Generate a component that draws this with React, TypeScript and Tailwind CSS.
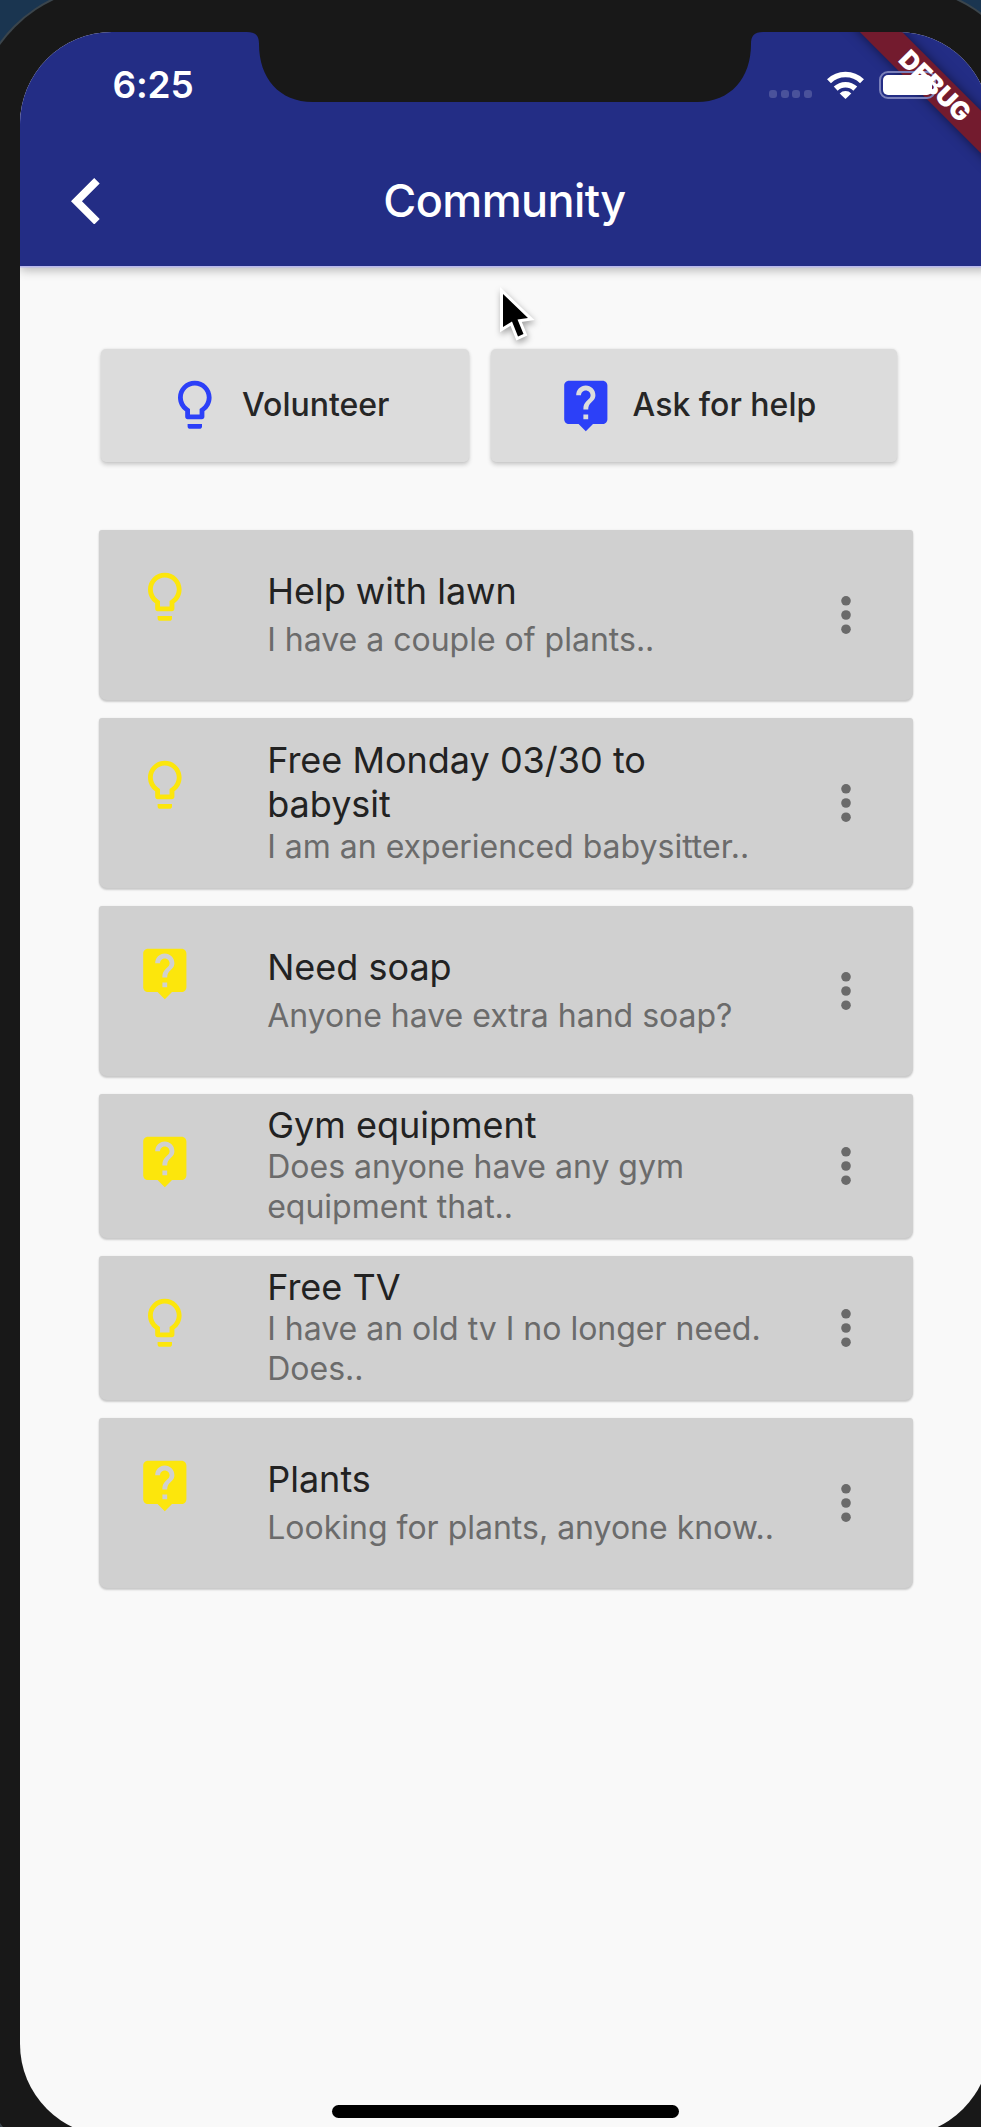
type Kind = "offer" | "request";

type Post = {
  kind: Kind;
  title: string;
  body: string;
  card: string;
  text: string;
  gap: string;
};

const posts: Post[] = [
  { kind: "offer", title: "Help with lawn", body: "I have a couple of plants..", card: "h-[170px]", text: "pt-[39px]", gap: "mt-[7px]" },
  { kind: "offer", title: "Free Monday 03/30 to babysit", body: "I am an experienced babysitter..", card: "h-[170px]", text: "pt-[20.5px]", gap: "mt-[0.5px]" },
  { kind: "request", title: "Need soap", body: "Anyone have extra hand soap?", card: "h-[170px]", text: "pt-[39px]", gap: "mt-[7px]" },
  { kind: "request", title: "Gym equipment", body: "Does anyone have any gym equipment that..", card: "h-[144px]", text: "pt-[9px]", gap: "mt-0" },
  { kind: "offer", title: "Free TV", body: "I have an old tv I no longer need. Does..", card: "h-[144px]", text: "pt-[9px]", gap: "mt-0" },
  { kind: "request", title: "Plants", body: "Looking for plants, anyone know..", card: "h-[170px]", text: "pt-[39px]", gap: "mt-[7px]" },
];

function Bulb({ className }: { className: string }) {
  return (
    <svg viewBox="0 0 24 24" fill="currentColor" className={className}>
      <path d="M9 21c0 .55.45 1 1 1h4c.55 0 1-.45 1-1v-1H9v1zm3-19C8.14 2 5 5.14 5 9c0 2.38 1.19 4.47 3 5.74V17c0 .55.45 1 1 1h6c.55 0 1-.45 1-1v-2.26c1.81-1.27 3-3.36 3-5.74 0-3.86-3.14-7-7-7zm2.85 11.1l-.85.6V16h-4v-2.3l-.85-.6C7.8 12.16 7 10.63 7 9c0-2.76 2.24-5 5-5s5 2.24 5 5c0 1.63-.8 3.16-2.15 4.1z" />
    </svg>
  );
}

function LiveHelp({ className }: { className: string }) {
  return (
    <svg viewBox="0 0 24 24" fill="currentColor" className={className}>
      <path d="M19 2H5c-1.11 0-2 .9-2 2v14c0 1.1.89 2 2 2h4l3 3 3-3h4c1.1 0 2-.9 2-2V4c0-1.1-.9-2-2-2zm-6 16h-2v-2h2v2zm2.07-7.75l-.9.92C13.45 11.9 13 12.5 13 14h-2v-.5c0-1.1.45-2.1 1.17-2.83l1.24-1.26c.37-.36.59-.86.59-1.41 0-1.1-.9-2-2-2s-2 .9-2 2H8c0-2.21 1.79-4 4-4s4 1.79 4 4c0 .88-.36 1.68-.93 2.25z" />
    </svg>
  );
}

function KindIcon({ kind, className }: { kind: Kind; className: string }) {
  return kind === "offer" ? <Bulb className={className} /> : <LiveHelp className={className} />;
}

function MoreDots() {
  return (
    <svg viewBox="0 0 12 40" fill="currentColor" className="h-[40px] w-[12px] text-[#6a6a6a]">
      <circle cx="6" cy="5.8" r="4.8" />
      <circle cx="6" cy="20" r="4.8" />
      <circle cx="6" cy="34.2" r="4.8" />
    </svg>
  );
}

function StatusIcons() {
  return (
    <div className="flex items-center">
      <div className="mt-[18px] flex gap-[3.7px]">
        <span className="size-2 rounded-[3px] bg-[#4a529b]" />
        <span className="size-2 rounded-[3px] bg-[#4a529b]" />
        <span className="size-2 rounded-[3px] bg-[#4a529b]" />
        <span className="size-2 rounded-[3px] bg-[#4a529b]" />
      </div>
      <svg viewBox="0 0 37 28" className="ml-[14.5px] h-[28px] w-[37px]" fill="none" stroke="white" strokeWidth="5.6">
        <path d="M2 10.2a23.6 23.6 0 0 1 33 0" />
        <path d="M8.7 17.6a14.2 14.2 0 0 1 19.6 0" />
        <path d="M18.5 28l-5.8-5.6a8.4 8.4 0 0 1 11.6 0z" fill="white" stroke="none" />
      </svg>
      <div className="ml-[15.5px] h-[28px] w-[57px] rounded-[9px] border-2 border-[#7a80ba] p-[2px]">
        <div className="h-full w-full rounded-[5px] bg-white" />
      </div>
    </div>
  );
}

function ActionButton({ kind, label, className }: { kind: Kind; label: string; className: string }) {
  return (
    <button
      className={`flex h-[113px] items-center gap-[18.5px] rounded-[5px] bg-[#dcdcdc] text-[32px] font-medium text-[#262626] shadow-[0_3px_4px_rgba(0,0,0,0.17),0_0_3px_rgba(0,0,0,0.1)] ${className}`}
    >
      <KindIcon kind={kind} className="size-[57.6px] shrink-0 text-[#2c40f8]" />
      {label}
    </button>
  );
}

function PostCard({ post }: { post: Post }) {
  return (
    <li
      className={`flex w-[813.5px] rounded-t-[3px] rounded-b-[8px] bg-[#d0d0d0] pl-[37px] shadow-[0_2px_2px_rgba(0,0,0,0.18),0_0_2px_rgba(0,0,0,0.08)] ${post.card}`}
    >
      <KindIcon kind={post.kind} className="mt-[38px] size-[57.6px] shrink-0 text-[#fce60c]" />
      <div className={`ml-[73.6px] w-[520.8px] shrink-0 ${post.text}`}>
        <h2 className="w-[440px] text-[36px] leading-[44px] text-[#222222]">{post.title}</h2>
        <p className={`text-[32px] leading-[40.3px] text-[#6b6b6b] ${post.gap}`}>{post.body}</p>
      </div>
      <button className="ml-[52px] flex items-center">
        <MoreDots />
      </button>
    </li>
  );
}

export default function App() {
  return (
    <div className="relative h-[2127px] w-[981px] overflow-hidden bg-[#1a3550] font-['Inter','Liberation_Sans',sans-serif]">
      <div className="-mt-[13px] -ml-[25px] h-[2194px] w-[1060px] rounded-[137px] bg-[#181818] p-[45px] shadow-[0_0_0_2px_#3b454c]">
        <div className="relative flex h-[2104px] w-[970px] flex-col overflow-hidden rounded-[92px] bg-[#f9f9f9]">
          <header className="relative z-10 h-[234px] shrink-0 bg-[#232d85] shadow-[0_1.5px_0_#b9b9ee,0_4px_10px_rgba(0,0,0,0.28)]">
            <div className="absolute top-[38.5px] left-[764.5px] h-[30px] w-[300px] rotate-45 bg-[#731b2e] shadow-[0_0_12px_rgba(0,0,0,0.5)]" />
            <div className="relative flex h-[106px] items-center justify-between pr-[54px] pl-[92.5px] text-white">
              <span className="text-[37px] font-semibold tracking-[-0.2px]">6:25</span>
              <StatusIcons />
            </div>
            <div className="relative flex h-[126px] items-center pr-[51px] pl-[51px] text-white">
              <svg viewBox="8 6 7.41 12" fill="currentColor" className="h-[46.5px] w-[28.7px]">
                <path d="M15.41 7.41L14 6l-6 6 6 6 1.41-1.41L10.83 12z" />
              </svg>
              <h1 className="mr-[29.7px] flex-1 text-center text-[45px] font-medium tracking-[-0.6px]">Community</h1>
            </div>
            <div className="absolute top-[38.5px] left-[764.5px] flex h-[30px] w-[300px] rotate-45 items-center justify-center text-[25.5px] font-black text-white">
              DEBUG
            </div>
            <svg viewBox="-14 0 520 70" className="absolute top-0 left-[225px] h-[70px] w-[520px]" fill="#181818">
              <path d="M-12 0C-3 0 0 4 0 12C0 46 20 70 54 70H438C472 70 492 46 492 12C492 4 495 0 504 0Z" />
            </svg>
          </header>

          <main className="pt-[82.5px] pl-[79px]">
            <div className="flex gap-[22px] pl-[1.5px]">
              <ActionButton kind="offer" label="Volunteer" className="w-[368.5px] pl-[65.5px]" />
              <ActionButton kind="request" label="Ask for help" className="w-[406px] pl-[65.5px]" />
            </div>
            <ul className="mt-[68px] flex flex-col gap-[18px]">
              {posts.map((post) => (
                <PostCard key={post.title} post={post} />
              ))}
            </ul>
          </main>

          <div className="mt-auto mb-[18.5px] h-[12.5px] w-[347px] shrink-0 self-center rounded-full bg-black" />
        </div>
      </div>

      <svg viewBox="0 0 40 56" className="absolute top-[286px] left-[495px] h-[56px] w-[40px] drop-shadow-[1px_3px_3px_rgba(0,0,0,0.35)]">
        <path
          d="M8 8V41L17 35.5L23 50.5L28.5 48L22.5 33.5L33 32Z"
          fill="black"
          stroke="white"
          strokeWidth="6"
          strokeLinejoin="miter"
          paintOrder="stroke"
        />
      </svg>
    </div>
  );
}
